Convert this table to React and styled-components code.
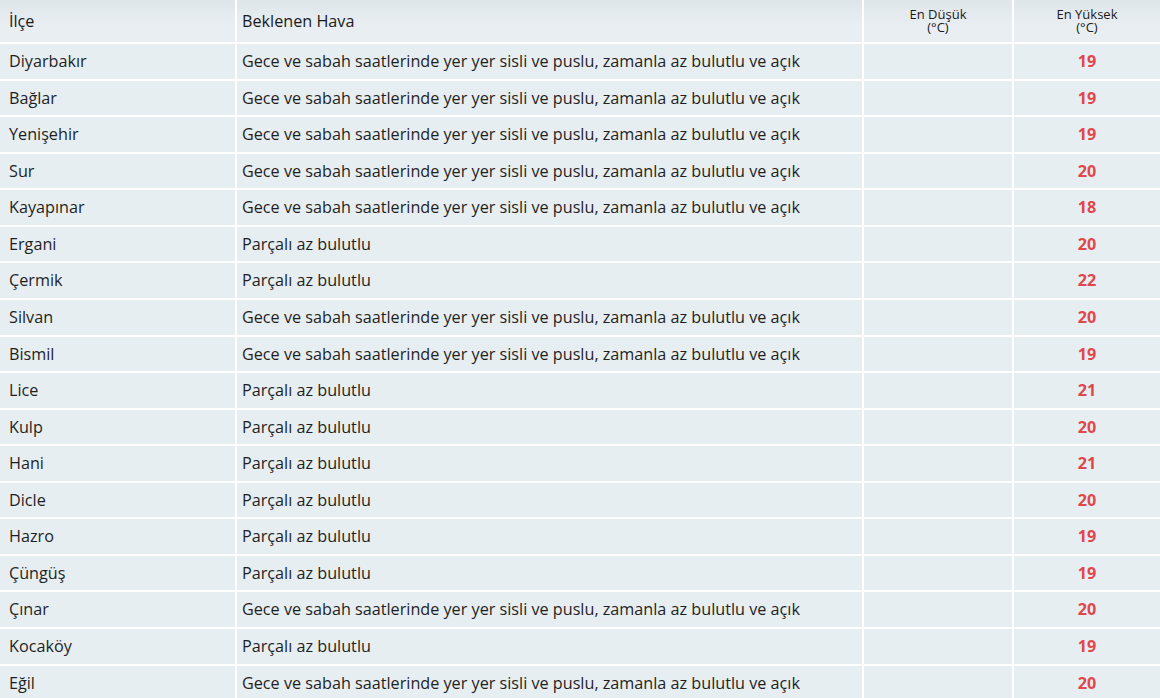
import React from "react";
import styled, { createGlobalStyle } from "styled-components";

const Global = createGlobalStyle`
  html, body { margin: 0; padding: 0; background: #ffffff; }
  body { font-family: "Open Sans", "Noto Sans", sans-serif; color: #1f1f1f; }
`;

const Table = styled.table`
  width: 1160px;
  border-collapse: collapse;
  table-layout: fixed;
  font-family: "Open Sans", "Noto Sans", sans-serif;
  font-size: 16.2px;
`;

const HeadRow = styled.tr`
  background: linear-gradient(#dfe6ea, #e8eef1 60%);
`;

const Th = styled.th`
  height: 43px;
  padding: 0 0 0 ${(p) => p.$pl || 0}px;
  box-sizing: border-box;
  border: 2px solid #ffffff;
  border-top: none;
  font-weight: 400;
  text-align: ${(p) => (p.$center ? "center" : "left")};
  font-size: ${(p) => (p.$small ? "13px" : "16.2px")};
  line-height: ${(p) => (p.$small ? "13.5px" : "22px")};
  color: #1a1a1a;
  vertical-align: middle;
  &:first-child { border-left: none; }
  &:last-child { border-right: none; }
`;

const SmallLine = styled.span`
  display: block;
  line-height: 13.5px;
`;

const Row = styled.tr`
  background: #e7eef1;
`;

const Td = styled.td`
  padding: 7px 0 5.78px ${(p) => p.$pl || 0}px;
  line-height: 21.8px;
  border: 2px solid #ffffff;
  text-align: ${(p) => (p.$center ? "center" : "left")};
  color: #1f1f1f;
  white-space: nowrap;
  &:first-child { border-left: none; }
  &:last-child { border-right: none; }
`;

const Hot = styled.span`
  color: #e0464b;
  font-weight: 700;
`;

const LONG = "Gece ve sabah saatlerinde yer yer sisli ve puslu, zamanla az bulutlu ve açık";
const SHORT = "Parçalı az bulutlu";

const rows = [
  ["Diyarbakır", LONG, 19],
  ["Bağlar", LONG, 19],
  ["Yenişehir", LONG, 19],
  ["Sur", LONG, 20],
  ["Kayapınar", LONG, 18],
  ["Ergani", SHORT, 20],
  ["Çermik", SHORT, 22],
  ["Silvan", LONG, 20],
  ["Bismil", LONG, 19],
  ["Lice", SHORT, 21],
  ["Kulp", SHORT, 20],
  ["Hani", SHORT, 21],
  ["Dicle", SHORT, 20],
  ["Hazro", SHORT, 19],
  ["Çüngüş", SHORT, 19],
  ["Çınar", LONG, 20],
  ["Kocaköy", SHORT, 19],
  ["Eğil", LONG, 20],
];

export default function App() {
  return (
    <>
      <Global />
      <Table>
        <colgroup>
          <col style={{ width: 236 }} />
          <col style={{ width: 627 }} />
          <col style={{ width: 150 }} />
          <col style={{ width: 147 }} />
        </colgroup>
        <thead>
          <HeadRow>
            <Th $pl={9}>İlçe</Th>
            <Th $pl={5}>Beklenen Hava</Th>
            <Th $center $small>
              <SmallLine>En Düşük</SmallLine>
              <SmallLine>(°C)</SmallLine>
            </Th>
            <Th $center $small>
              <SmallLine>En Yüksek</SmallLine>
              <SmallLine>(°C)</SmallLine>
            </Th>
          </HeadRow>
        </thead>
        <tbody>
          {rows.map(([name, desc, hi]) => (
            <Row key={name}>
              <Td $pl={9}>{name}</Td>
              <Td $pl={5}>{desc}</Td>
              <Td $center></Td>
              <Td $center>
                <Hot>{hi}</Hot>
              </Td>
            </Row>
          ))}
        </tbody>
      </Table>
    </>
  );
}
